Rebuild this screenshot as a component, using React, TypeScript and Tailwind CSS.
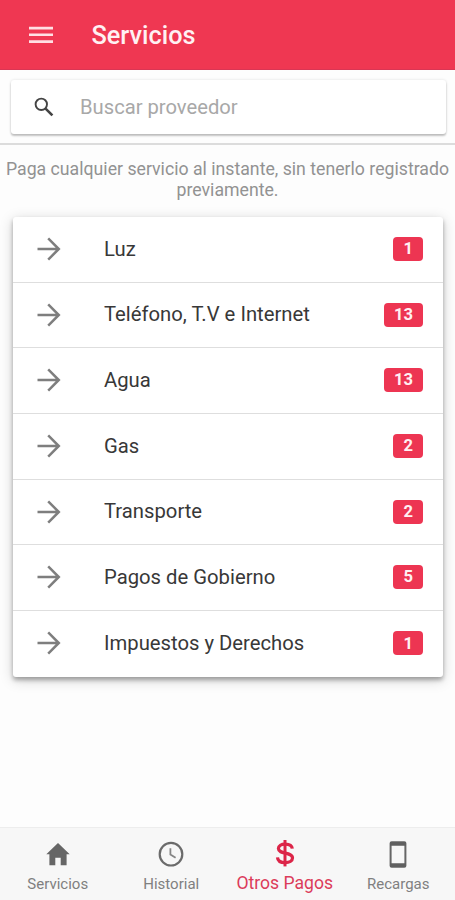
import type { ReactNode } from "react";

const categories = [
  { name: "Luz", count: 1 },
  { name: "Teléfono, T.V e Internet", count: 13 },
  { name: "Agua", count: 13 },
  { name: "Gas", count: 2 },
  { name: "Transporte", count: 2 },
  { name: "Pagos de Gobierno", count: 5 },
  { name: "Impuestos y Derechos", count: 1 },
];

function MenuIcon() {
  return (
    <svg width="24" height="18" viewBox="0 0 24 18" fill="#ffdfe4">
      <path d="M0 .7h24v2.7H0zM0 7.4h24v2.7H0zM0 14.2h24v2.7H0z" />
    </svg>
  );
}

function SearchIcon() {
  return (
    <svg width="20" height="20" viewBox="0 0 20 20" fill="none" stroke="#444">
      <circle cx="7.3" cy="7.3" r="5.7" strokeWidth="1.9" />
      <path d="M11.6 11.6l6.8 6.8" strokeWidth="2.6" />
    </svg>
  );
}

function ArrowIcon() {
  return (
    <svg width="24" height="24" viewBox="0 0 24 24" fill="none" stroke="#7e7e7e" strokeWidth="2.5">
      <path d="M.5 12h22M11.2 1.4L21.8 12 11.2 22.6" />
    </svg>
  );
}

function HomeIcon() {
  return (
    <svg width="24" height="24" viewBox="0 0 24 24" fill="#666">
      <path d="M12 1L.3 12.3h3.1v10.9h5.9v-7.5h5.4v7.5h5.9V12.3h3.1z" />
    </svg>
  );
}

function ClockIcon() {
  return (
    <svg width="26" height="26" viewBox="0 0 26 26" fill="none">
      <circle cx="13" cy="13.2" r="11.3" stroke="#6b6b6b" strokeWidth="2.2" />
      <path d="M12.4 7.2v6.4l5.2 3.2" stroke="#858585" strokeWidth="1.8" />
    </svg>
  );
}

function DollarIcon() {
  return (
    <svg width="20" height="28" viewBox="0 0 20 28" fill="none" stroke="#dc2548">
      <path d="M10 0v26.4" strokeWidth="3" />
      <path
        d="M17.3 8.7C17 5.7 14.2 4.1 10.2 4.1c-4 0-6.8 1.6-6.8 4.5 0 6.1 14.1 3 14.1 9.4 0 3-3.3 4.6-7.2 4.6-4.4 0-7.6-1.8-7.8-5.3"
        strokeWidth="3.2"
      />
    </svg>
  );
}

function PhoneIcon() {
  return (
    <svg width="18" height="27" viewBox="0 0 18 27" fill="none">
      <rect x="1.6" y="1.3" width="14.8" height="24.4" rx="1" stroke="#666" strokeWidth="2" />
      <path d="M1 1h16v3.8H1zM1 22.2h16V26H1z" fill="#606060" />
    </svg>
  );
}

function Tab({ icon, label, active }: { icon: ReactNode; label: string; active?: boolean }) {
  return (
    <button className="flex flex-1 basis-0 flex-col items-center">
      <span className="flex h-[28px] items-center">{icon}</span>
      <span
        className={
          active
            ? "mt-[5px] text-[17.6px] leading-[20px] whitespace-nowrap text-[#dc3c5a]"
            : "mt-[6px] text-[15px] leading-[20px] text-[#808080]"
        }
      >
        {label}
      </span>
    </button>
  );
}

export default function App() {
  return (
    <div className="flex h-[900px] w-[455px] flex-col bg-[#fdfdfd] font-[Roboto,sans-serif]">
      <header className="flex h-[70px] shrink-0 items-center border-b border-[#d93654] bg-[#ef3752] pl-[29px]">
        <MenuIcon />
        <h1 className="ml-[38.5px] pt-[2px] text-[25.3px] font-medium text-[#fff1f3]">Servicios</h1>
      </header>

      <div className="h-[75px] shrink-0 border-b-2 border-[#dcdcdc] pt-[10px] pr-[9px] pl-[11px]">
        <label className="flex h-[54px] items-center rounded-[3px] bg-white pl-[22.5px] shadow-[0_2px_2px_rgba(0,0,0,0.22),0_0_3px_rgba(0,0,0,0.12)]">
          <SearchIcon />
          <input
            className="ml-[26.5px] w-[300px] text-[20.2px] outline-none placeholder:text-[#a8a8a8]"
            placeholder="Buscar proveedor"
          />
        </label>
      </div>

      <p className="mt-[14px] shrink-0 text-center text-[17.7px] leading-[21px] whitespace-nowrap text-[#929292]">
        Paga cualquier servicio al instante, sin tenerlo registrado
        <br />
        previamente.
      </p>

      <ul className="mt-[16px] mr-[12px] ml-[13px] shrink-0 divide-y divide-[#dedede] rounded-[3px] bg-white shadow-[0_3px_4px_rgba(0,0,0,0.3),0_3px_14px_rgba(0,0,0,0.18)]">
        {categories.map(({ name, count }) => (
          <li key={name} className="flex h-[65.7px] items-center pr-[20px] pb-px pl-[23.5px]">
            <ArrowIcon />
            <span className="ml-[43.5px] flex-1 text-[20.25px] text-[#383838]">{name}</span>
            <span className="flex h-[24px] items-center rounded-[4px] bg-[#ed3552] px-[10px] pt-px text-[16.6px] font-bold text-[#fff0f2]">
              {count}
            </span>
          </li>
        ))}
      </ul>

      <nav className="mt-auto flex h-[73px] shrink-0 border-t border-[#ededed] bg-[#f7f7f7] pt-[12px] pl-px">
        <Tab icon={<HomeIcon />} label="Servicios" />
        <Tab icon={<ClockIcon />} label="Historial" />
        <Tab icon={<DollarIcon />} label="Otros Pagos" active />
        <Tab icon={<PhoneIcon />} label="Recargas" />
      </nav>
    </div>
  );
}
